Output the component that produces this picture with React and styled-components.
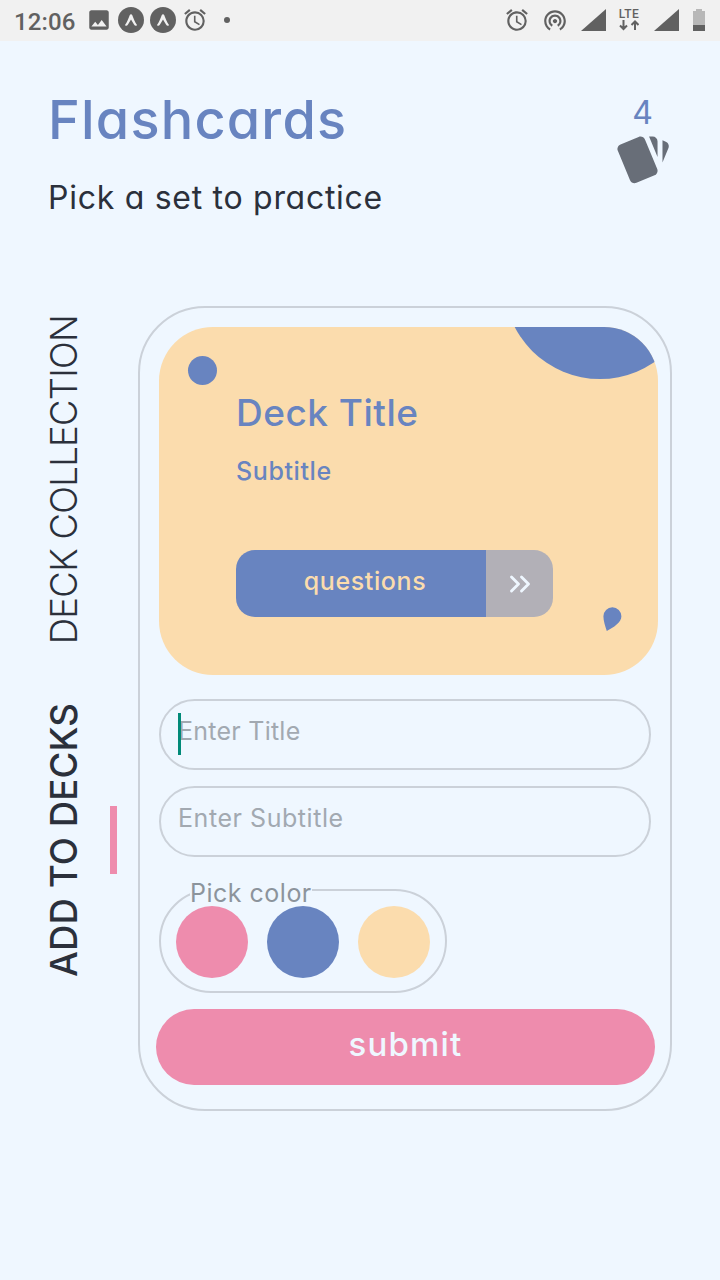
import React from "react";
import styled, { createGlobalStyle, css } from "styled-components";
import { MdAlarm, MdImage, MdWifiTethering } from "react-icons/md";

const color = {
  page: "#eff7ff",
  blue: "#6884c0",
  cream: "#fbdcad",
  pink: "#ee8cad",
  ink: "#2b303b",
  line: "#cbd1d9",
  placeholder: "#a2a9b1",
  label: "#8c949c",
  status: "#616161",
};

const GlobalStyle = createGlobalStyle`
  *, *::before, *::after { box-sizing: border-box; }
  body {
    margin: 0;
    background: ${color.page};
    font-family: Inter, "Liberation Sans", sans-serif;
    font-feature-settings: "cv11" 1;
  }
`;

const Screen = styled.div`
  width: 720px;
  height: 1280px;
  overflow: hidden;
  background: ${color.page};
`;

const StatusBar = styled.div`
  height: 41px;
  padding: 0 15px 0 14px;
  display: flex;
  justify-content: space-between;
  background: #f1f1f1;
  color: ${color.status};
  font-family: Roboto, sans-serif;
`;

const StatusGroup = styled.div`
  display: flex;
  align-items: center;
  svg { display: block; flex: none; }
`;

const Clock = styled.span`
  width: 72px;
  font-size: 24px;
  font-weight: 500;
  line-height: 28px;
  padding-top: 2px;
  letter-spacing: 0.1px;
`;

const Photo = styled(MdImage)`
  margin-bottom: 2px;
`;

const AppBadge = styled.span`
  width: 26px;
  height: 26px;
  margin-left: 6px;
  margin-bottom: 1px;
  border-radius: 50%;
  background: ${color.status};
`;

const Alarm = styled(MdAlarm)`
  margin: 0 0 1px ${(p) => p.$gap}px;
`;

const Hotspot = styled(MdWifiTethering)`
  margin: 0 13px 1px 12px;
`;

const Dot = styled.span`
  width: 6px;
  height: 6px;
  margin: 0 0 1px 16px;
  border-radius: 50%;
  background: ${color.status};
`;

const Network = styled.span`
  width: 24px;
  height: 24px;
  margin: 0 13px 1px 11px;
  display: flex;
  flex-direction: column;
  align-items: center;
  font-size: 12px;
  font-weight: 500;
  line-height: 12px;
  letter-spacing: 0.4px;
`;

const Signal = styled.svg`
  margin-bottom: 1px;
`;

const Battery = styled.svg`
  margin: 0 0 1px 14px;
`;

const Header = styled.header`
  height: 265px;
  padding: 49px 48px 0 48px;
  display: flex;
  justify-content: space-between;
  align-items: flex-start;
`;

const Title = styled.h1`
  margin: 0 0 27px;
  font-size: 54px;
  font-weight: 500;
  line-height: 60px;
  padding-bottom: 1px;
  letter-spacing: 1.2px;
  color: ${color.blue};
  white-space: nowrap;
`;

const Tagline = styled.p`
  margin: 0;
  font-size: 32px;
  line-height: 40px;
  letter-spacing: 0.72px;
  color: ${color.ink};
  white-space: nowrap;
`;

const DeckCount = styled.div`
  width: 59px;
  margin: 7px 0 0;
  display: flex;
  flex-direction: column;
  align-items: center;
  font-size: 32px;
  line-height: 32px;
  color: ${color.blue};
  svg { display: block; margin-top: 2px; }
`;

const Body = styled.main`
  display: flex;
  align-items: flex-start;
`;

const Tabs = styled.nav`
  width: 138px;
  padding: 9px 21px 0 44px;
  display: flex;
  flex-direction: column;
  gap: 59px;
`;

const TabRow = styled.div`
  display: flex;
  justify-content: space-between;
  align-items: center;
`;

const Tab = styled.span`
  writing-mode: vertical-rl;
  transform: rotate(180deg);
  width: 40px;
  line-height: 40px;
  font-size: 36.5px;
  white-space: nowrap;
  color: ${color.ink};
  font-weight: ${(p) => (p.$active ? 550 : 300)};
  letter-spacing: ${(p) => (p.$active ? "0.15px" : "-0.75px")};
`;

const Marker = styled.span`
  width: 7px;
  height: 68px;
  background: ${color.pink};
`;

const outlined = css`
  border: 2px solid ${color.line};
`;

const Frame = styled.section`
  ${outlined}
  width: 534px;
  height: 805px;
  padding: 19px 0 0 19px;
  border-radius: 67px;
`;

const DeckCard = styled.article`
  position: relative;
  overflow: hidden;
  width: 499px;
  height: 348px;
  padding: 62px 0 0 77px;
  border-radius: 54px;
  background: ${color.cream};
  color: ${color.blue};
`;

const Blob = styled.span`
  position: absolute;
  left: ${(p) => p.$x}px;
  top: ${(p) => p.$y}px;
  width: ${(p) => p.$size}px;
  height: ${(p) => p.$size}px;
  border-radius: 50%;
  background: ${color.blue};
`;

const Drop = styled.svg`
  position: absolute;
  left: 444px;
  top: 280px;
`;

const DeckTitle = styled.h2`
  margin: 0;
  font-size: 37px;
  font-weight: 500;
  line-height: 48px;
  letter-spacing: 0.5px;
  white-space: nowrap;
`;

const DeckSubtitle = styled.p`
  margin: 18px 0 0;
  font-size: 25px;
  font-weight: 500;
  line-height: 32px;
  letter-spacing: 0.6px;
`;

const DeckButton = styled.div`
  display: flex;
  width: 317px;
  height: 67px;
  margin-top: 63px;
  border-radius: 19px;
  overflow: hidden;
`;

const ButtonLabel = styled.span`
  width: 250px;
  text-align: center;
  padding-left: 8px;
  background: ${color.blue};
  color: ${color.cream};
  font-size: 25px;
  font-weight: 500;
  line-height: 63px;
  letter-spacing: 0.6px;
`;

const ButtonArrow = styled.span`
  width: 67px;
  display: flex;
  align-items: center;
  justify-content: center;
  background: #b2b0b7;
`;

const Field = styled.div`
  ${outlined}
  width: 492px;
  height: 71px;
  margin-top: ${(p) => p.$gap}px;
  padding: 12px 0 0 17px;
  border-radius: 36px;
  display: flex;
  align-items: flex-start;
`;

const Caret = styled.span`
  z-index: 1;
  width: 3px;
  height: 42px;
  margin-right: -3px;
  background: #018a78;
`;

const Placeholder = styled.span`
  font-size: 25px;
  line-height: 37px;
  white-space: nowrap;
  color: ${color.placeholder};
  letter-spacing: ${(p) => p.$spacing};
`;

const ColorPicker = styled.div`
  ${outlined}
  position: relative;
  width: 288px;
  height: 104px;
  margin-top: 32px;
  padding: 15px;
  border-radius: 52px;
  display: flex;
  gap: 19px;
`;

const PickerLabel = styled.span`
  position: absolute;
  left: 29px;
  top: -13px;
  width: 122px;
  height: 28px;
  background: ${color.page};
  color: ${color.label};
  font-size: 25px;
  line-height: 31px;
  white-space: nowrap;
  letter-spacing: 0.5px;
`;

const Swatch = styled.span`
  position: relative;
  width: 72px;
  height: 72px;
  border-radius: 50%;
  background: ${(p) => p.$fill};
`;

const Submit = styled.button`
  display: block;
  width: 499px;
  height: 76px;
  margin: 16px 0 0 -3px;
  padding: 0 0 5px;
  border: 0;
  border-radius: 38px;
  background: ${color.pink};
  color: ${color.page};
  font: 500 33px/71px Inter, sans-serif;
  font-feature-settings: "cv11" 1;
  letter-spacing: 1.2px;
`;

const SignalIcon = () => (
  <Signal width="25" height="22" viewBox="0 0 25 22">
    <path d="M25 0V22H0Z" fill={color.status} />
  </Signal>
);

const UpBadge = () => (
  <AppBadge>
    <svg width="26" height="26" viewBox="0 0 26 26">
      <path
        d="M7 18C9.2 15.4 10.4 11.4 11.7 8.2C12.2 6.8 13.8 6.8 14.3 8.2C15.6 11.4 16.8 15.4 19 18C18.2 19.4 16.9 19 16 17.6L13 12.6L10 17.6C9.1 19 7.8 19.4 7 18Z"
        fill="#f1f1f1"
      />
    </svg>
  </AppBadge>
);

const CardsIcon = () => (
  <svg width="59" height="59" viewBox="0 0 24 24" fill="#686e78">
    <path d="M21.47 4.35L20.13 3.79V12.82L22.56 6.96C22.97 5.94 22.5 4.77 21.47 4.35M1.97 8.05L6.93 20C7.24 20.77 7.97 21.24 8.74 21.26C9 21.26 9.27 21.21 9.53 21.1L16.9 18.05C17.65 17.74 18.11 17 18.13 16.26C18.14 16 18.09 15.71 18 15.45L13 3.5C12.71 2.73 11.97 2.26 11.19 2.25C10.93 2.25 10.67 2.31 10.42 2.4L3.06 5.45C2.04 5.87 1.55 7.04 1.97 8.05M18.12 4.25A2 2 0 0 0 16.12 2.25H14.67L18.12 10.59Z" />
  </svg>
);

export default function App() {
  return (
    <Screen>
      <GlobalStyle />
      <StatusBar>
        <StatusGroup>
          <Clock>12:06</Clock>
          <Photo size={26} />
          <UpBadge />
          <UpBadge />
          <Alarm size={26} $gap={6} />
          <Dot />
        </StatusGroup>
        <StatusGroup>
          <Alarm size={26} $gap={0} />
          <Hotspot size={26} />
          <SignalIcon />
          <Network>
            LTE
            <svg width="20" height="11" viewBox="0 0 20 11" fill="none" stroke={color.status} strokeWidth="2">
              <path d="M4.5 0V9M1 5.5L4.5 9L8 5.5M16 10V2M12.5 5L16 1.5L19.5 5" />
            </svg>
          </Network>
          <SignalIcon />
          <Battery width="12" height="22" viewBox="0 0 12 22">
            <path d="M0 2h3V0h6v2h3V16H0Z" fill="#b8b8b8" />
            <path d="M0 16H12V22H0Z" fill={color.status} />
          </Battery>
        </StatusGroup>
      </StatusBar>

      <Header>
        <div>
          <Title>Flashcards</Title>
          <Tagline>Pick a set to practice</Tagline>
        </div>
        <DeckCount>
          4
          <CardsIcon />
        </DeckCount>
      </Header>

      <Body>
        <Tabs>
          <TabRow>
            <Tab>DECK COLLECTION</Tab>
          </TabRow>
          <TabRow>
            <Tab $active>ADD TO DECKS</Tab>
            <Marker />
          </TabRow>
        </Tabs>

        <Frame>
          <DeckCard>
            <Blob $x={345} $y={-140} $size={192} />
            <Blob $x={29} $y={29} $size={29} />
            <DeckTitle>Deck Title</DeckTitle>
            <DeckSubtitle>Subtitle</DeckSubtitle>
            <DeckButton>
              <ButtonLabel>questions</ButtonLabel>
              <ButtonArrow>
                <svg width="22" height="20" viewBox="0 0 22 20" fill="none" stroke={color.page} strokeWidth="2.9" strokeLinecap="round" strokeLinejoin="round">
                  <path d="M2.5 3L9.5 10L2.5 17M12.5 3L19.5 10L12.5 17" />
                </svg>
              </ButtonArrow>
            </DeckButton>
            <Drop width="20" height="25" viewBox="0 0 20 25">
              <path d="M3.8 24C2.2 19 0.4 14 0.4 9.3A9 9 0 0 1 18.4 9.3C18.4 15.5 10.5 20.5 3.8 24Z" fill={color.blue} />
            </Drop>
          </DeckCard>

          <Field $gap={24}>
            <Caret />
            <Placeholder $spacing="0.25px">Enter Title</Placeholder>
          </Field>
          <Field $gap={16}>
            <Placeholder $spacing="0.55px">Enter Subtitle</Placeholder>
          </Field>

          <ColorPicker>
            <PickerLabel>Pick color</PickerLabel>
            <Swatch $fill={color.pink} />
            <Swatch $fill={color.blue} />
            <Swatch $fill={color.cream} />
          </ColorPicker>

          <Submit>submit</Submit>
        </Frame>
      </Body>
    </Screen>
  );
}
